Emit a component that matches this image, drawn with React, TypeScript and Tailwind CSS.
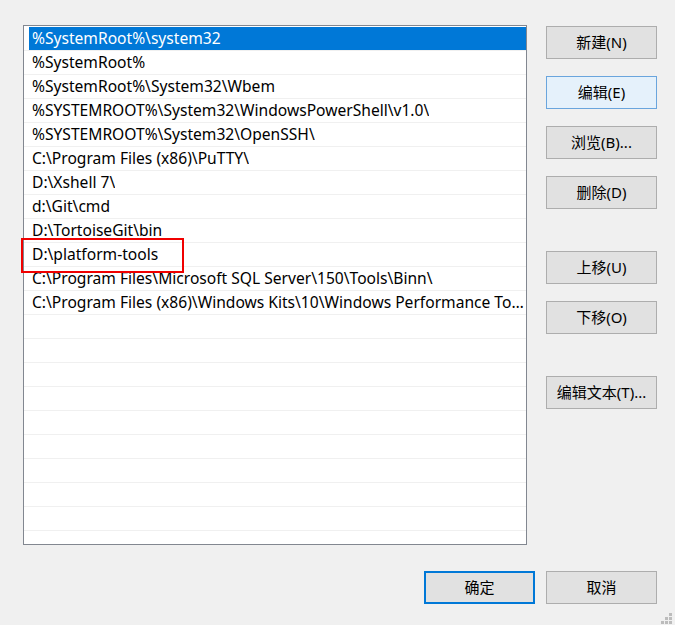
import React from 'react';

const paths = [
  '%SystemRoot%\\system32',
  '%SystemRoot%',
  '%SystemRoot%\\System32\\Wbem',
  '%SYSTEMROOT%\\System32\\WindowsPowerShell\\v1.0\\',
  '%SYSTEMROOT%\\System32\\OpenSSH\\',
  'C:\\Program Files (x86)\\PuTTY\\',
  'D:\\Xshell 7\\',
  'd:\\Git\\cmd',
  'D:\\TortoiseGit\\bin',
  'D:\\platform-tools',
  'C:\\Program Files\\Microsoft SQL Server\\150\\Tools\\Binn\\',
  'C:\\Program Files (x86)\\Windows Kits\\10\\Windows Performance Toolkit\\',
];

const font = { fontFamily: '"Noto Sans", "Noto Sans CJK SC", sans-serif' };

function WinButton({ label, className = '', variant = 'normal' }: { label: string; className?: string; variant?: 'normal' | 'hover' | 'default' }) {
  const look =
    variant === 'hover'
      ? 'bg-[#e5f1fb] border border-[#6aa5dd]'
      : variant === 'default'
      ? 'bg-[#e1e1e1] border-2 border-[#0078d7]'
      : 'bg-[#e1e1e1] border border-[#adadad]';
  return (
    <button
      className={`w-[111px] h-[33px] flex items-center justify-center text-[15px] text-black ${look} ${className}`}
    >
      {label}
    </button>
  );
}

export default function App() {
  const emptyRows = Array.from({ length: 10 });

  return (
    <div className="relative w-[675px] h-[625px] bg-[#f0f0f0] overflow-hidden" style={font}>
      <div className="flex pt-[25px] pl-[23px]">
        {/* path list */}
        <div className="w-[504px] h-[520px] border border-[#828790] bg-white overflow-hidden pt-px">
          {paths.map((p, i) => (
            <div key={p} className="h-[24px] border-b border-[#f0f0f0]">
              <div
                className={`ml-[5px] h-[23px] pl-[3px] pr-[1px] pt-px flex items-center text-[15.6px] ${
                  i === 0 ? 'bg-[#0078d7] text-white' : 'text-black'
                }`}
              >
                <span className="truncate">{p}</span>
              </div>
            </div>
          ))}
          {emptyRows.map((_, i) => (
            <div key={i} className="h-[24px] border-b border-[#f0f0f0]" />
          ))}
        </div>

        {/* side buttons */}
        <div className="ml-[19px] mt-px flex flex-col">
          <WinButton label="新建(N)" />
          <WinButton label="编辑(E)" variant="hover" className="mt-[17px]" />
          <WinButton label="浏览(B)..." className="mt-[17px]" />
          <WinButton label="删除(D)" className="mt-[17px]" />
          <WinButton label="上移(U)" className="mt-[42px]" />
          <WinButton label="下移(O)" className="mt-[17px]" />
          <WinButton label="编辑文本(T)..." className="mt-[42px]" />
        </div>
      </div>

      {/* dialog buttons */}
      <div className="flex justify-end gap-[11px] pr-[18px] mt-[26px]">
        <WinButton label="确定" variant="default" />
        <WinButton label="取消" />
      </div>

      {/* red annotation box */}
      <div className="absolute left-[21px] top-[238px] w-[163px] h-[35px] border-2 border-[#f00000]" />

      {/* resize grip */}
      <svg className="absolute right-[3px] bottom-px" width="11" height="11" viewBox="0 0 11 11">
        <g fill="#bcbcbc">
          <rect x="8" y="0" width="3" height="3" />
          <rect x="4" y="4" width="3" height="3" />
          <rect x="8" y="4" width="3" height="3" />
          <rect x="0" y="8" width="3" height="3" />
          <rect x="4" y="8" width="3" height="3" />
          <rect x="8" y="8" width="3" height="3" />
        </g>
      </svg>
    </div>
  );
}
